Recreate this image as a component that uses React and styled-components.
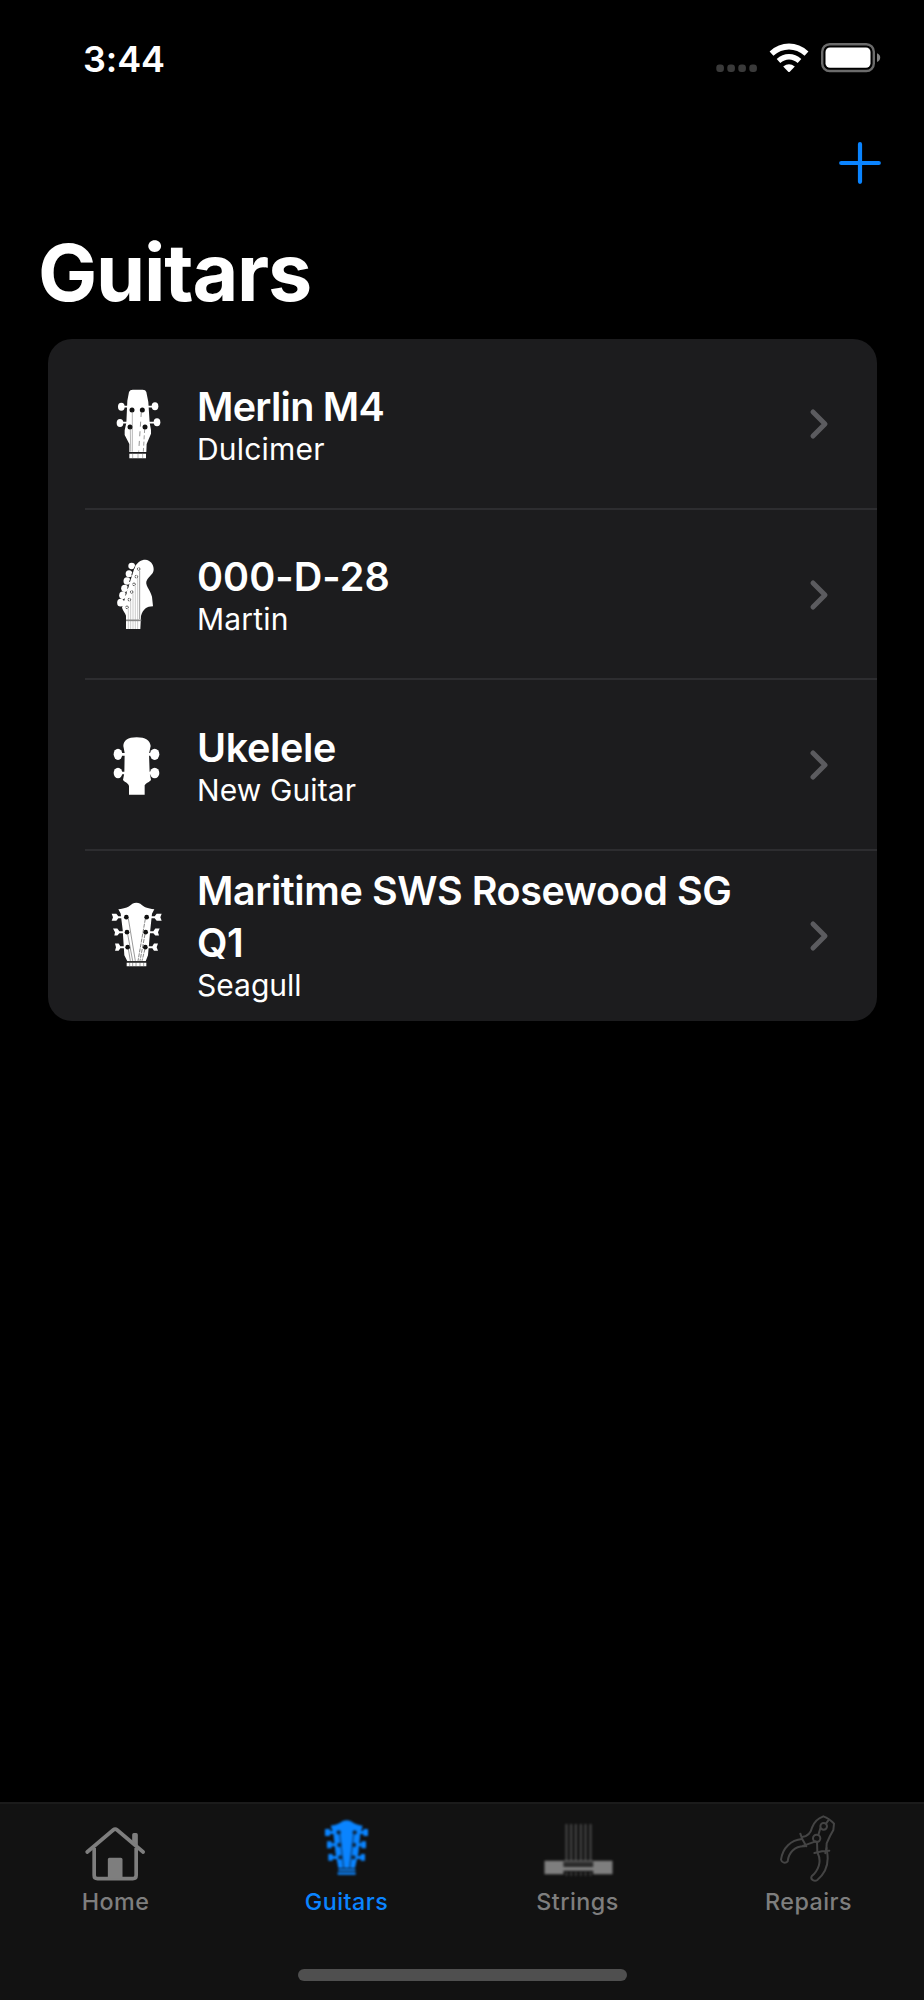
import React from "react";
import styled, { createGlobalStyle } from "styled-components";

const GlobalStyle = createGlobalStyle`
  * { box-sizing: border-box; }
  body { margin: 0; background: #000; }
`;

const Screen = styled.div`
  width: 924px;
  height: 2000px;
  display: flex;
  flex-direction: column;
  background: #000;
  color: #fff;
  font-family: Inter, "Liberation Sans", sans-serif;
`;

const StatusBar = styled.header`
  height: 118px;
  padding: 0 43px 0 83px;
  display: flex;
  align-items: center;
  justify-content: space-between;
`;

const Clock = styled.time`
  font-size: 36px;
  font-weight: 600;
  letter-spacing: -0.1px;
`;

const StatusIcons = styled.div`
  display: flex;
  align-items: center;
  padding-bottom: 2px;
  svg { display: block; }
`;

const WifiIcon = styled.svg`
  width: 40px;
  height: 34px;
  margin-left: 11px;
`;

const BatteryIcon = styled.svg`
  width: 60px;
  height: 34px;
  margin-left: 12px;
`;

const NavBar = styled.nav`
  height: 92px;
  padding-right: 43px;
  display: flex;
  align-items: center;
  justify-content: flex-end;
`;

const AddButton = styled.button`
  width: 42px;
  height: 42px;
  margin-top: -2px;
  padding: 0;
  border: 0;
  background: none;
  svg { display: block; }
`;

const Title = styled.h1`
  height: 129px;
  margin: 0;
  padding: 14px 0 0 38px;
  font-size: 79px;
  font-weight: 700;
  line-height: 96px;
  letter-spacing: -1.2px;
`;

const List = styled.ul`
  width: 829px;
  margin: 0 0 0 47.5px;
  padding: 0;
  list-style: none;
  background: #1c1c1e;
  border-radius: 24px;
  overflow: hidden;
`;

const Row = styled.li`
  height: 170.5px;
  display: flex;
  align-items: center;
  padding-left: 37.5px;
`;

const RowBody = styled.div`
  flex: 1;
  height: 100%;
  display: flex;
  align-items: center;
  padding: 0 47px 0 15px;
  box-shadow: ${(p) => (p.$last ? "none" : "inset 0 -2px 0 #2d2d30")};
`;

const RowIcon = styled.svg`
  width: 80px;
  height: 110px;
  flex: none;
`;

const RowText = styled.div`
  flex: 1;
  padding: 0 60px ${(p) => (p.$last ? 4 : 2)}px 17px;
`;

const Name = styled.div`
  font-size: 39.5px;
  font-weight: 600;
  line-height: 52px;
  letter-spacing: ${(p) => p.$track}px;
`;

const Maker = styled.div`
  font-size: 30px;
  line-height: 32.6px;
  letter-spacing: ${(p) => p.$track}px;
`;

const Spacer = styled.div`
  flex: 1;
`;

const TabBar = styled.footer`
  height: 198px;
  border-top: 2px solid #1b1b1b;
  background: #121212;
  display: flex;
  flex-direction: column;
  align-items: center;
`;

const Tabs = styled.div`
  width: 100%;
  height: 165px;
  display: grid;
  grid-template-columns: repeat(4, 1fr);
`;

const Tab = styled.div`
  padding-top: 8px;
  display: flex;
  flex-direction: column;
  align-items: center;
  color: ${(p) => (p.$active ? "#0a84ff" : "#7e7e7e")};
`;

const TabIcon = styled.svg`
  width: 80px;
  height: 80px;
  flex: none;
  filter: ${(p) => (p.$soft ? `blur(${p.$soft}px)` : "none")};
`;

const TabLabel = styled.span`
  font-size: 23.3px;
  font-weight: 500;
  line-height: 28px;
  margin-top: -4px;
  letter-spacing: 0.45px;
`;

const HomeIndicator = styled.div`
  width: 329px;
  height: 12px;
  border-radius: 6px;
  background: #4f4f4f;
`;

const SlimHead = () => (
  <RowIcon viewBox="0 -3 240 330">
    <g fill="#fff" stroke="#fff">
      <path d="M66 110H162M60 158H170" strokeWidth="5" />
      <path
        d="M87 66Q90 59 98 59H128Q137 59 139 66L145 96L149 158L153 180V191L140 222L139 246H88V222L74 195V181L79 158L82 92Z"
        stroke="none"
      />
      <g stroke="none">
        <ellipse cx="64" cy="110" rx="10" ry="12" />
        <ellipse cx="165" cy="109" rx="10" ry="12" />
        <ellipse cx="60" cy="159" rx="10" ry="12" />
        <ellipse cx="171" cy="157" rx="10" ry="12" />
        <path d="M88 251H138V265H88Z" />
      </g>
    </g>
    <g fill="#111">
      <circle cx="96" cy="120" r="7.5" />
      <circle cx="127" cy="120" r="7.5" />
      <circle cx="90" cy="171" r="7.5" />
      <circle cx="135" cy="171" r="7.5" />
    </g>
    <g fill="none" stroke="#777" strokeWidth="1.6">
      <path d="M97 125V245M91 176L92 245M98 251V265M114 251V265M128 251V265" />
      <path d="M124 126L116 245" strokeDasharray="15 14" stroke="#333" />
      <path d="M134 177L130 245" strokeDasharray="12 7" stroke="#444" />
    </g>
  </RowIcon>
);

const OffsetHead = () => (
  <RowIcon viewBox="0 -1 240 330">
    <g fill="#fff">
      <ellipse cx="95" cy="77" rx="10" ry="9.5" />
      <ellipse cx="87" cy="100" rx="10" ry="10.5" />
      <ellipse cx="81" cy="122" rx="10.5" ry="11.5" />
      <ellipse cx="74" cy="144" rx="10.5" ry="11" />
      <ellipse cx="68" cy="165" rx="10.5" ry="11.5" />
      <ellipse cx="62" cy="187" rx="10.5" ry="11.5" />
      <path d="M105 78C113 66 123 58 136 58C151 59 161 72 161 87C161 102 148 106 141 119C132 133 151 148 156 169L159 198C140 198 129 207 123 227L121 266H78V226C76 218 69 211 66 202L75 172Z" />
    </g>
    <path d="M105 78L99 92L92 113L85 135L79 157L72 180" stroke="#333" strokeWidth="2.5" strokeDasharray="8 13" fill="none" />
    <g fill="#fff" stroke="#333" strokeWidth="3" strokeDasharray="4 2">
      <circle cx="116" cy="86" r="4" />
      <circle cx="109" cy="109" r="4" />
      <circle cx="102" cy="132" r="4" />
      <circle cx="95" cy="155" r="4" />
      <circle cx="88" cy="178" r="4" />
      <circle cx="81" cy="201" r="4" />
    </g>
    <g fill="none" strokeWidth="1.8" stroke="#aaa">
      <path d="M85 205V266M92 182V266M99 159V266M106 136V266M113 113V266" />
      <path d="M119 91V236" stroke="#555" />
      <path d="M78 240H124" stroke="#888" strokeWidth="5" />
    </g>
  </RowIcon>
);

const SolidHead = () => (
  <RowIcon viewBox="0 -15 240 330">
    <g fill="#fff">
      <ellipse cx="54" cy="118" rx="13" ry="17" />
      <ellipse cx="164" cy="118" rx="14" ry="17" />
      <ellipse cx="54" cy="174" rx="13" ry="16" />
      <ellipse cx="164" cy="174" rx="14" ry="16" />
      <path d="M60 114H158V122H60ZM60 170H158V178H60Z" />
      <path d="M70 93C71 76 83 67 110 67C137 67 150 76 152 93L147 116L149 174L153 194C149 202 138 202 134 211V239H87V213C84 202 74 203 69 195L73 174L74 114Z" />
    </g>
  </RowIcon>
);

const FlaredHead = () => (
  <RowIcon viewBox="1 -11.5 240 330">
    <g fill="#fff">
      <path d="M56 73C76 72 89 66 98 57Q110 51 122 57C131 66 144 72 164 73L157 87L152 134L145 211L138 229H83L74 211L69 135L63 86Z" />
      <path d="M36 87H50L56 94H78V100H56L50 108H36L40 97ZM40 131H53L59 139H80V145H59L53 152H44L46 142ZM46 176H57L62 184H80V190H62L57 198H46L49 187Z" />
      <path d="M186 87H171L165 94H144V100H165L171 108H186L182 97ZM180 131H167L161 139H140V145H161L167 152H178L175 142ZM175 176H163L158 184H140V190H158L163 198H175L171 187Z" />
      <path d="M81 233H140V244H81Z" />
    </g>
    <g fill="#111">
      <circle cx="80" cy="97" r="7" />
      <circle cx="141" cy="97" r="7" />
      <circle cx="82" cy="142" r="7" />
      <circle cx="138" cy="142" r="7" />
      <circle cx="84" cy="187" r="7" />
      <circle cx="137" cy="187" r="7" />
    </g>
    <g fill="none" strokeWidth="1.8">
      <path d="M86 101L107 228M84 148L99 228M86 192L92 228" stroke="#555" />
      <path d="M137 102L115 228M136 148L121 228M136 192L127 228" stroke="#333" strokeDasharray="12 3" />
      <path d="M90 233V244M99 233V244M109 233V244M121 233V244M132 233V244" stroke="#666" />
      <path d="M79 231H142" stroke="#222" strokeWidth="4" />
    </g>
  </RowIcon>
);

const HomeGlyph = () => (
  <TabIcon viewBox="47.5 64 240 240" fill="none" stroke="currentColor">
    <path
      d="M81 184L159 118Q165 113 171 118L249 184"
      strokeWidth="11"
      strokeLinecap="round"
    />
    <path d="M102 172V254Q102 264 112 264H218Q228 264 228 254V172" strokeWidth="11" />
    <path
      d="M216 151V132Q216 127 221 127H228Q233 127 233 132V166ZM143 264V206Q143 201 148 201H182Q187 201 187 206V264Z"
      fill="currentColor"
      stroke="none"
    />
  </TabIcon>
);

const GuitarGlyph = () => (
  <TabIcon viewBox="740 66 240 240" $soft={0.9}>
    <g fill="currentColor">
      <path d="M811 107C829 105 838 100 846 94Q859 87 872 94C880 100 890 105 907 107L900 132L894 190L884 234H834L826 192L819 130Z" />
      <path d="M794 117H809V123H830V132H809V138H794ZM800 154H814V160H830V169H814V175H800ZM804 192H817V198H832V207H817V212H804Z" />
      <path d="M923 117H909V123H888V132H909V138H923ZM917 154H903V160H888V169H903V175H917ZM914 192H901V198H886V207H901V212H914Z" />
      <path d="M834 237H885V243H834ZM832 247H886V254H832Z" />
    </g>
    <g fill="#10263d">
      <circle cx="835" cy="127" r="6.5" />
      <circle cx="883" cy="127" r="6.5" />
      <circle cx="837" cy="165" r="6.5" />
      <circle cx="881" cy="165" r="6.5" />
      <circle cx="840" cy="202" r="6.5" />
      <circle cx="879" cy="202" r="6.5" />
    </g>
    <path
      d="M838 132L850 235M880 132L868 235"
      stroke="#10345c"
      strokeWidth="4"
      opacity="0.8"
      fill="none"
    />
  </TabIcon>
);

const StringsGlyph = () => (
  <TabIcon viewBox="113.5 66 240 240" $soft={0.9}>
    <path
      d="M199 102V216M213 102V216M227 102V216M242 102V216M256 102V216M271 102V216"
      stroke="#484848"
      strokeWidth="6"
    />
    <path d="M191 220H279" stroke="#303030" strokeWidth="13" />
    <path d="M199 246V258M213 246V258M227 246V258M242 246V258M256 246V258M271 246V258" stroke="#383838" strokeWidth="6" />
    <path d="M133 212H190V230H279V212H337V253H279V242H190V253H133Z" fill="currentColor" />
    <path d="M190 213H279" stroke="#666" strokeWidth="4" />
  </TabIcon>
);

const PliersGlyph = () => (
  <TabIcon
    viewBox="806 66 240 240"
    fill="none"
    stroke="#444"
    strokeWidth="6"
    strokeLinejoin="round"
    strokeLinecap="round"
    $soft={0.7}
  >
    <path d="M905 141C922 139 931 130 935 113C941 96 952 85 969 79C984 84 993 92 1001 101L999 120L989 138L979 160L978 181M946 154L912 166M950 155L951 185" />
    <path d="M900 131L906 148L918 169L908 167M942 189L965 184L987 182M979 174L975 190" />
    <path d="M905 147C872 150 847 173 842 209C844 219 856 221 862 214C865 188 882 168 913 169" />
    <path d="M952 189C965 215 954 241 934 259C929 269 943 276 951 270C976 249 987 221 980 184" />
    <circle cx="970" cy="109" r="10" />
    <circle cx="949" cy="145" r="11" />
    <path d="M960 115L954 135M977 101L984 91" />
  </TabIcon>
);

const Cellular = () => (
  <svg width="42" height="34" viewBox="0 0 42 34" fill="#3a3a3a">
    {[0, 11, 22, 33].map((x) => (
      <rect key={x} x={x + 0.3} y="23.6" width="7.6" height="7.4" rx="3" />
    ))}
  </svg>
);

const Wifi = () => (
  <WifiIcon viewBox="0 0 40 34">
    <g fill="none" stroke="#fff" strokeWidth="5.8">
      <path d="M2.5 12.6Q10.5 5.5 20 5.5T37.5 12.6" />
      <path d="M9.5 20Q14.2 15.8 20 15.8T30.5 20" strokeWidth="5.4" />
    </g>
    <path d="M14.2 25.5Q20 21 25.8 25.5L20.8 30.7Q20 31.5 19.2 30.7Z" fill="#fff" />
  </WifiIcon>
);

const Battery = () => (
  <BatteryIcon viewBox="0 0 60 34">
    <rect x="1.2" y="3.2" width="51.6" height="26.8" rx="7.5" fill="none" stroke="#6b6b6b" strokeWidth="2.4" />
    <rect x="4.5" y="6.5" width="45" height="20.3" rx="4.5" fill="#fff" />
    <path d="M56 12.3Q59.2 13.4 59.2 16.6T56 21Z" fill="#808080" />
  </BatteryIcon>
);

const Chevron = () => (
  <svg width="22" height="34" viewBox="0 0 22 34" fill="none" stroke="#5b5b5f" strokeWidth="5" strokeLinecap="round" strokeLinejoin="round">
    <path d="M5 5L17 17L5 29" />
  </svg>
);

const guitars = [
  { name: "Merlin M4", maker: "Dulcimer", Icon: SlimHead, track: -0.72, makerTrack: 0.2 },
  { name: "000-D-28", maker: "Martin", Icon: OffsetHead, track: 0.05, makerTrack: 0.2 },
  { name: "Ukelele", maker: "New Guitar", Icon: SolidHead, track: -0.35, makerTrack: 0.1 },
  { name: "Maritime SWS Rosewood SG Q1", maker: "Seagull", Icon: FlaredHead, track: -0.42, makerTrack: 0 },
];

const tabs = [
  { label: "Home", Icon: HomeGlyph },
  { label: "Guitars", Icon: GuitarGlyph, active: true },
  { label: "Strings", Icon: StringsGlyph },
  { label: "Repairs", Icon: PliersGlyph },
];

export default function App() {
  return (
    <Screen>
      <GlobalStyle />
      <StatusBar>
        <Clock>3:44</Clock>
        <StatusIcons>
          <Cellular />
          <Wifi />
          <Battery />
        </StatusIcons>
      </StatusBar>
      <NavBar>
        <AddButton aria-label="Add guitar">
          <svg width="42" height="42" viewBox="0 0 42 42" stroke="#0a84ff" strokeWidth="4.2" strokeLinecap="round">
            <path d="M21 2.2V39.8M2.2 21H39.8" />
          </svg>
        </AddButton>
      </NavBar>
      <Title>Guitars</Title>
      <List>
        {guitars.map(({ name, maker, Icon, track, makerTrack }, i) => {
          const last = i === guitars.length - 1;
          return (
            <Row key={name}>
              <RowBody $last={last}>
                <Icon />
                <RowText $last={last}>
                  <Name $track={track}>{name}</Name>
                  <Maker $track={makerTrack}>{maker}</Maker>
                </RowText>
                <Chevron />
              </RowBody>
            </Row>
          );
        })}
      </List>
      <Spacer />
      <TabBar>
        <Tabs>
          {tabs.map(({ label, Icon, active }) => (
            <Tab key={label} $active={active}>
              <Icon />
              <TabLabel>{label}</TabLabel>
            </Tab>
          ))}
        </Tabs>
        <HomeIndicator />
      </TabBar>
    </Screen>
  );
}
